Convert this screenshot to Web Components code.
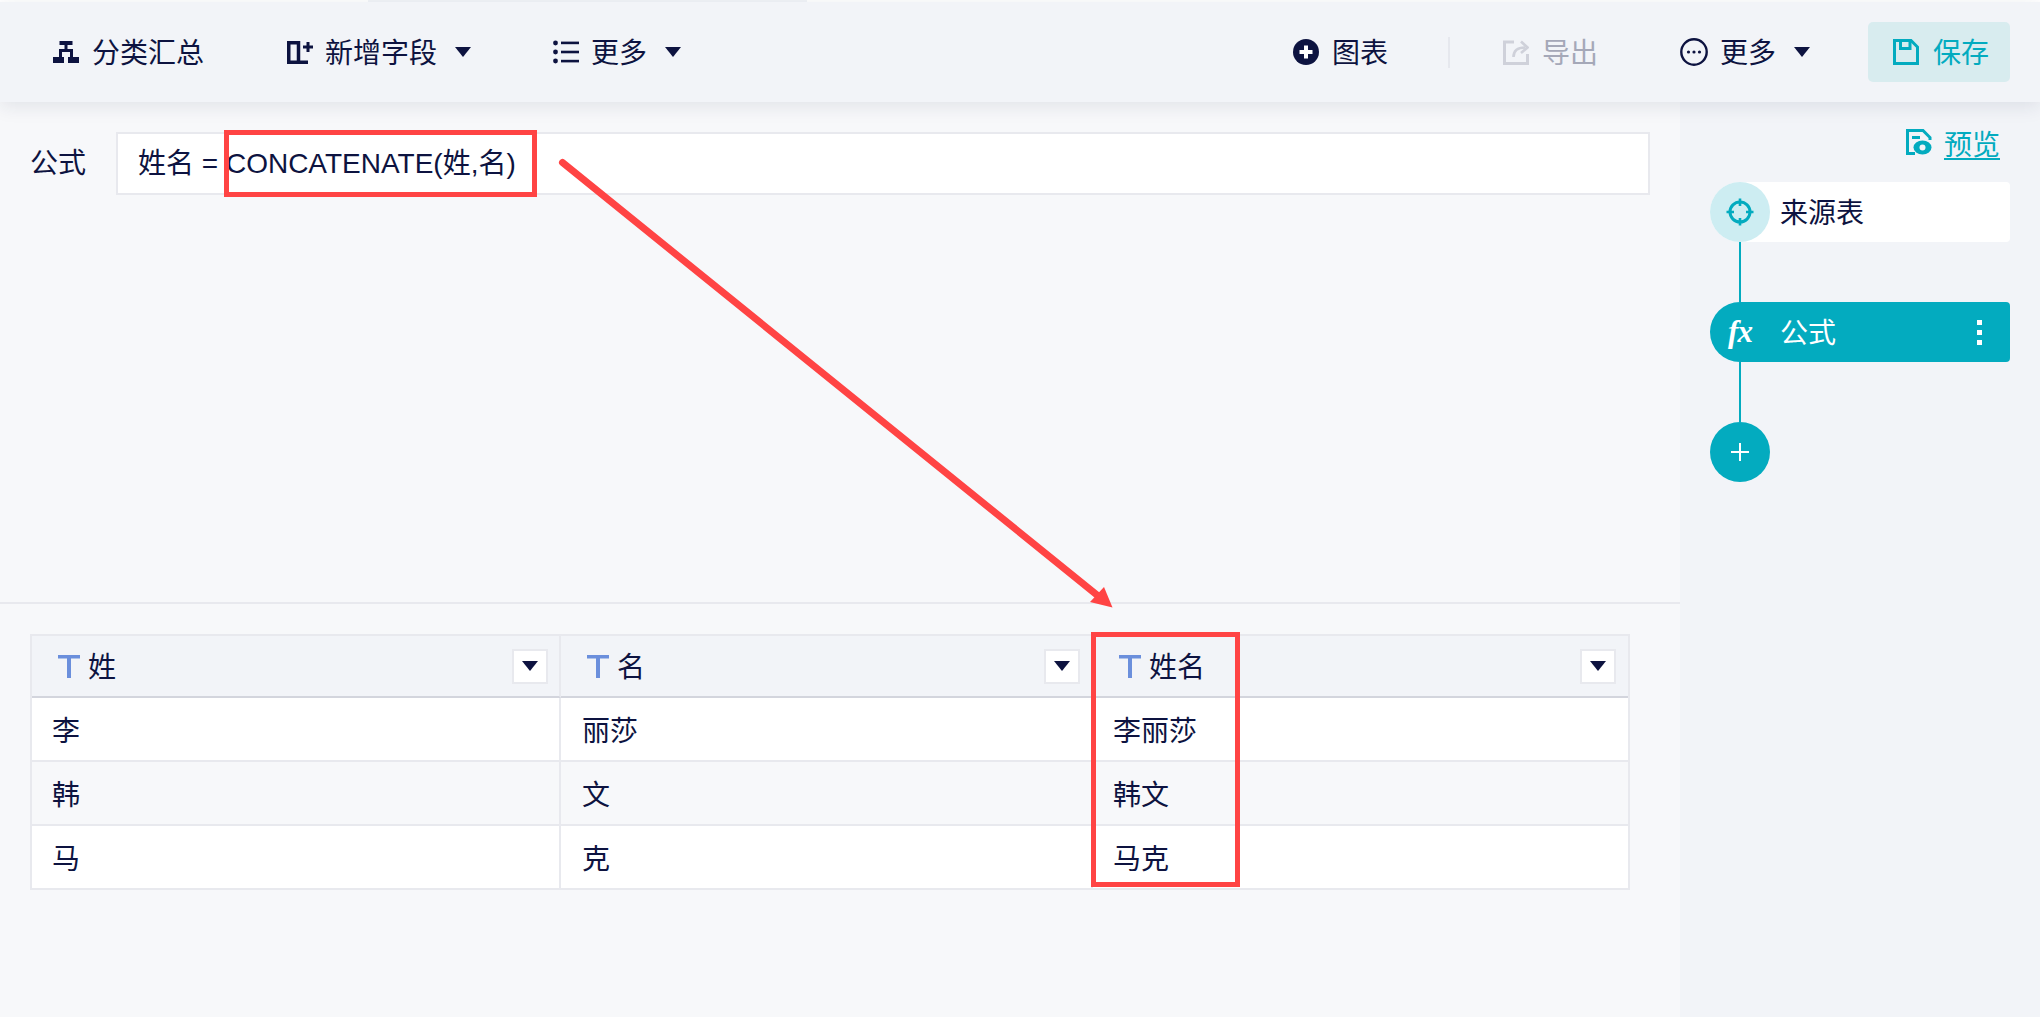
<!DOCTYPE html>
<html lang="zh">
<head>
<meta charset="utf-8">
<title>公式</title>
<style>
html, body { margin: 0; height: 100%; overflow: hidden; }
body { font: 28px "Liberation Sans", "Noto Sans CJK SC", sans-serif; color: #0d1340; background: #f7f8fa; }
</style>
</head>
<body>
<app-page>
	<tool-bar slot="top">
		<tool-button slot="left" icon="org" style="margin-left:53px">分类汇总</tool-button>
		<tool-button slot="left" icon="addfield" caret style="margin-left:83px">新增字段</tool-button>
		<tool-button slot="left" icon="list" caret style="margin-left:82px">更多</tool-button>
		<tool-button slot="right" icon="plus">图表</tool-button>
		<span slot="right" style="width:2px;height:31px;background:#e6e8ee;margin:0 53px 0 60px"></span>
		<tool-button slot="right" icon="export" disabled>导出</tool-button>
		<tool-button slot="right" icon="more" caret style="margin-left:82px">更多</tool-button>
		<save-button slot="right" style="margin-left:58px">保存</save-button>
	</tool-bar>
	<formula-bar slot="main" label="公式">姓名 = CONCATENATE(姓,名)</formula-bar>
	<data-table slot="main">
		<table-head>姓</table-head><table-head>名</table-head><table-head>姓名</table-head>
		<table-cell>李</table-cell><table-cell>丽莎</table-cell><table-cell>李丽莎</table-cell>
		<table-cell alt>韩</table-cell><table-cell alt>文</table-cell><table-cell alt>韩文</table-cell>
		<table-cell>马</table-cell><table-cell>克</table-cell><table-cell>马克</table-cell>
	</data-table>
	<step-panel slot="side"></step-panel>
	<red-marks slot="over"></red-marks>
</app-page>

<script>
// 工具栏图标
const ICONS = {
	org: '<svg width="26" height="23" viewBox="0 0 26 23" fill="#0d1340"><rect x="6.5" y="0" width="13" height="4"/><rect x="11.5" y="4" width="3" height="5"/><rect x="6" y="8" width="14" height="3"/><rect x="6" y="8" width="3" height="8"/><rect x="17" y="8" width="3" height="8"/><rect x="0" y="16" width="11" height="6"/><rect x="15" y="16" width="11" height="6"/></svg>',
	addfield: '<svg width="26" height="23" viewBox="0 0 26 23" fill="none" stroke="#0d1340"><path d="M1.75 1.75H11.5V21.25H1.75ZM11.5 21.25H21" stroke-width="3.5"/><path d="M21 1V11M16 6H26" stroke-width="3"/></svg>',
	list: '<svg width="26" height="24" viewBox="0 0 26 24" fill="#0d1340"><circle cx="2.5" cy="3" r="2.4"/><circle cx="2.5" cy="12" r="2.4"/><circle cx="2.5" cy="21" r="2.4"/><rect x="8" y="1.6" width="18" height="2.6"/><rect x="8" y="10.7" width="18" height="2.6"/><rect x="8" y="19.8" width="18" height="2.6"/></svg>',
	plus: '<svg width="26" height="26" viewBox="0 0 26 26"><circle cx="13" cy="13" r="13" fill="#0d1340"/><path d="M13 6.5V19.5M6.5 13H19.5" stroke="#fff" stroke-width="4"/></svg>',
	export: '<svg width="26" height="26" viewBox="0 0 26 26" fill="none" stroke="#cfd1da" stroke-width="3"><path d="M11 3H1.5V24.5H24.5V15"/><path d="M10.5 18C10.5 12 14 8.5 22 8.5" stroke-width="2.6"/><path d="M18 2.5L24.5 8.5L18 14" stroke-width="2.6"/></svg>',
	more: '<svg width="28" height="28" viewBox="0 0 28 28" fill="#0d1340"><circle cx="14" cy="14" r="12.7" fill="none" stroke="#0d1340" stroke-width="2.4"/><circle cx="8.5" cy="14" r="1.6"/><circle cx="14" cy="14" r="1.6"/><circle cx="19.5" cy="14" r="1.6"/></svg>',
	save: '<svg width="26" height="26" viewBox="0 0 26 26" fill="none" stroke="#03abbf" stroke-width="3"><path d="M1.5 1.5H18L24.5 8V24.5H1.5Z"/><path d="M7.5 1.5V9.5H17V1.5"/></svg>',
	preview: '<svg width="26" height="26" viewBox="0 0 26 26" fill="none" stroke="#03abbf" stroke-width="3"><path d="M9 24.5H1.5V1.5H17L24 8.5V11"/><path d="M6 8.5H14"/><ellipse cx="16.5" cy="18.5" rx="9" ry="7" fill="#03abbf" stroke="none"/><circle cx="16.5" cy="18.5" r="3" fill="#f2f4f8" stroke="none"/></svg>',
	target: '<svg width="28" height="28" viewBox="0 0 28 28" fill="none" stroke="#03abbf"><circle cx="14" cy="14" r="10" stroke-width="3"/><path d="M14 0.5V8M14 20V27.5M0.5 14H8M20 14H27.5" stroke-width="2.6"/></svg>'
};
const CARET = '<svg width="16" height="10" viewBox="0 0 16 10" fill="#0d1340"><path d="M0 0H16L8 10Z"/></svg>';

class AppPage extends HTMLElement {
	constructor() {
		super();
		this.attachShadow({mode: "open"}).innerHTML = `<style>
			:host { display: grid; grid-template: 2px 100px 1fr / 1680px 360px; height: 1017px; position: relative; }
			.strip { grid-column: 1 / 3; display: flex; background: #fff; }
			.strip i { margin-left: 368px; width: 439px; background: #f2f4f8; }
			.top { grid-column: 1 / 3; z-index: 2; display: block; }
			.main { display: block; background: #f7f8fa; }
			.side { display: block; background: #f2f4f8; }
		</style>
		<div class="strip"><i></i></div>
		<div class="top"><slot name="top"></slot></div>
		<div class="main"><slot name="main"></slot></div>
		<div class="side"><slot name="side"></slot></div>
		<slot name="over"></slot>`;
	}
}
customElements.define("app-page", AppPage);

class ToolBar extends HTMLElement {
	constructor() {
		super();
		this.attachShadow({mode: "open"}).innerHTML = `<style>
			:host { display: flex; height: 100px; align-items: center; justify-content: space-between; background: #f2f4f8; box-shadow: 0 4px 18px rgba(30, 40, 70, .1); padding-right: 30px; }
			div { display: flex; align-items: center; }
		</style>
		<div><slot name="left"></slot></div>
		<div><slot name="right"></slot></div>`;
	}
}
customElements.define("tool-bar", ToolBar);

class ToolButton extends HTMLElement {
	constructor() {
		super();
		this.attachShadow({mode: "open"});
	}
	connectedCallback() {
		var disabled = this.hasAttribute("disabled");
		var icon = this.getAttribute("icon");
		var gap = icon == "org" || icon == "plus" || icon == "export" ? 13 : 12;
		this.shadowRoot.innerHTML = `<style>
			:host { display: flex; align-items: center; height: 40px; color: ${disabled ? "#a5a8b8" : "#0d1340"}; }
			.icon { display: flex; margin-right: ${gap}px; }
			.label { margin-top: -2px; }
			.caret { display: flex; margin-left: 18px; }
		</style>
		<span class="icon">${ICONS[icon]}</span><span class="label"><slot></slot></span>
		${this.hasAttribute("caret") ? '<span class="caret">' + CARET + "</span>" : ""}`;
	}
}
customElements.define("tool-button", ToolButton);

class SaveButton extends HTMLElement {
	constructor() {
		super();
		this.attachShadow({mode: "open"}).innerHTML = `<style>
			:host { display: flex; align-items: center; width: 142px; height: 60px; box-sizing: border-box; padding-left: 25px; gap: 14px; border-radius: 5px; background: #d8ecef; color: #03abbf; }
			span { display: flex; }
			.label { margin-top: -2px; }
		</style><span>${ICONS.save}</span><span class="label"><slot></slot></span>`;
	}
}
customElements.define("save-button", SaveButton);

class FormulaBar extends HTMLElement {
	constructor() {
		super();
		this.attachShadow({mode: "open"});
	}
	connectedCallback() {
		this.shadowRoot.innerHTML = `<style>
			:host { display: flex; height: 502px; box-sizing: border-box; align-items: flex-start; padding: 30px 30px 0; border-bottom: 2px solid #e8e9ee; }
			label { width: 86px; line-height: 63px; }
			.input { width: 1534px; height: 63px; box-sizing: border-box; border: 2px solid #e8e9ee; background: #fff; padding-left: 20px; line-height: 59px; white-space: pre; }
		</style><label>${this.getAttribute("label")}</label><div class="input"><slot></slot></div>`;
	}
}
customElements.define("formula-bar", FormulaBar);

class DataTable extends HTMLElement {
	constructor() {
		super();
		this.attachShadow({mode: "open"}).innerHTML = `<style>
			:host { display: grid; grid-template-columns: 529px 532px 535px; grid-template-rows: 62px 64px 64px 64px; width: 1600px; box-sizing: border-box; margin: 30px 0 0 30px; border: solid #e8e9ee; border-width: 2px 2px 0 2px; }
		</style><slot></slot>`;
	}
}
customElements.define("data-table", DataTable);

class TableHead extends HTMLElement {
	constructor() {
		super();
		this.attachShadow({mode: "open"}).innerHTML = `<style>
			:host { display: flex; align-items: center; box-sizing: border-box; padding: 0 11px 0 26px; background: #f2f4f8; border-right: 2px solid #e8e9ee; border-bottom: 2px solid #d3d5dd; }
			:host(:nth-child(3)) { border-right: 0; padding-right: 12px; }
			.type { display: flex; margin-right: 8px; }
			.name { flex: 1; margin-top: -2px; }
			.drop { display: flex; align-items: center; justify-content: center; width: 36px; height: 35px; box-sizing: border-box; border: 2px solid #e8e9ee; background: #fff; }
		</style>
		<span class="type"><svg width="22" height="23" viewBox="0 0 22 23" fill="#6b8fdc"><rect x="0" y="0" width="22" height="3.5"/><rect x="9" y="0" width="4" height="23"/></svg></span>
		<span class="name"><slot></slot></span>
		<span class="drop">${CARET}</span>`;
	}
}
customElements.define("table-head", TableHead);

class TableCell extends HTMLElement {
	constructor() {
		super();
		this.attachShadow({mode: "open"}).innerHTML = `<style>
			:host { display: flex; align-items: center; box-sizing: border-box; padding-left: 20px; background: #fff; border-right: 2px solid #e8e9ee; border-bottom: 2px solid #e8e9ee; }
			:host([alt]) { background: #f7f8fa; }
			:host(:nth-child(3n+2)) { padding-left: 21px; }
			:host(:nth-child(3n)) { border-right: 0; }
		</style><slot></slot>`;
	}
}
customElements.define("table-cell", TableCell);

class StepPanel extends HTMLElement {
	constructor() {
		super();
		this.attachShadow({mode: "open"}).innerHTML = `<style>
			:host { display: block; padding: 0 30px; }
			.preview { display: flex; justify-content: flex-end; align-items: center; gap: 12px; height: 80px; padding-right: 10px; box-sizing: border-box; color: #03abbf; }
			.preview svg { display: block; }
			.preview u { margin-top: 2px; text-underline-offset: 3px; }
			.step { display: flex; align-items: center; height: 60px; border-radius: 30px 4px 4px 30px; background: #fff; }
			.round { display: flex; flex: none; align-items: center; justify-content: center; width: 60px; height: 60px; border-radius: 50%; margin-right: 10px; }
			.src .round { background: #cdedf2; }
			.name { margin-top: -2px; }
			.cur { background: #03abbf; color: #fff; }
			.fx { font: italic bold 31px "Liberation Serif", serif; letter-spacing: -1px; color: #fff; }
			.dots { display: grid; gap: 5px; margin-left: auto; margin-right: 28px; }
			.dots i { width: 5px; height: 5px; background: #fff; }
			.line { width: 2px; height: 60px; margin-left: 29px; background: #03abbf; }
			.add { display: flex; align-items: center; justify-content: center; width: 60px; height: 60px; border-radius: 50%; background: #03abbf; }
		</style>
		<div class="preview">${ICONS.preview}<u>预览</u></div>
		<div class="step src"><span class="round">${ICONS.target}</span><span class="name">来源表</span></div>
		<div class="line"></div>
		<div class="step cur"><span class="round"><span class="fx">fx</span></span><span class="name">公式</span><span class="dots"><i></i><i></i><i></i></span></div>
		<div class="line"></div>
		<div class="add"><svg width="20" height="20" viewBox="0 0 20 20" stroke="#fff" stroke-width="2"><path d="M10 1V19M1 10H19"/></svg></div>`;
	}
}
customElements.define("step-panel", StepPanel);

// 红色标注, 盖在页面上
class RedMarks extends HTMLElement {
	constructor() {
		super();
		this.attachShadow({mode: "open"}).innerHTML = `<style>
			:host { position: absolute; inset: 0; z-index: 3; pointer-events: none; }
			svg { display: block; }
		</style>
		<svg width="2040" height="1017" fill="none" stroke="#ff4444">
			<rect x="226.5" y="132.5" width="308" height="62" stroke-width="5"/>
			<rect x="1093.5" y="634.5" width="144" height="250" stroke-width="5"/>
			<path d="M562.5 162.5L1097 595" stroke-width="7" stroke-linecap="round"/>
			<path d="M1112.5 607.5L1104 587L1090 602Z" fill="#ff4444" stroke="none"/>
		</svg>`;
	}
}
customElements.define("red-marks", RedMarks);
</script>
</body>
</html>
